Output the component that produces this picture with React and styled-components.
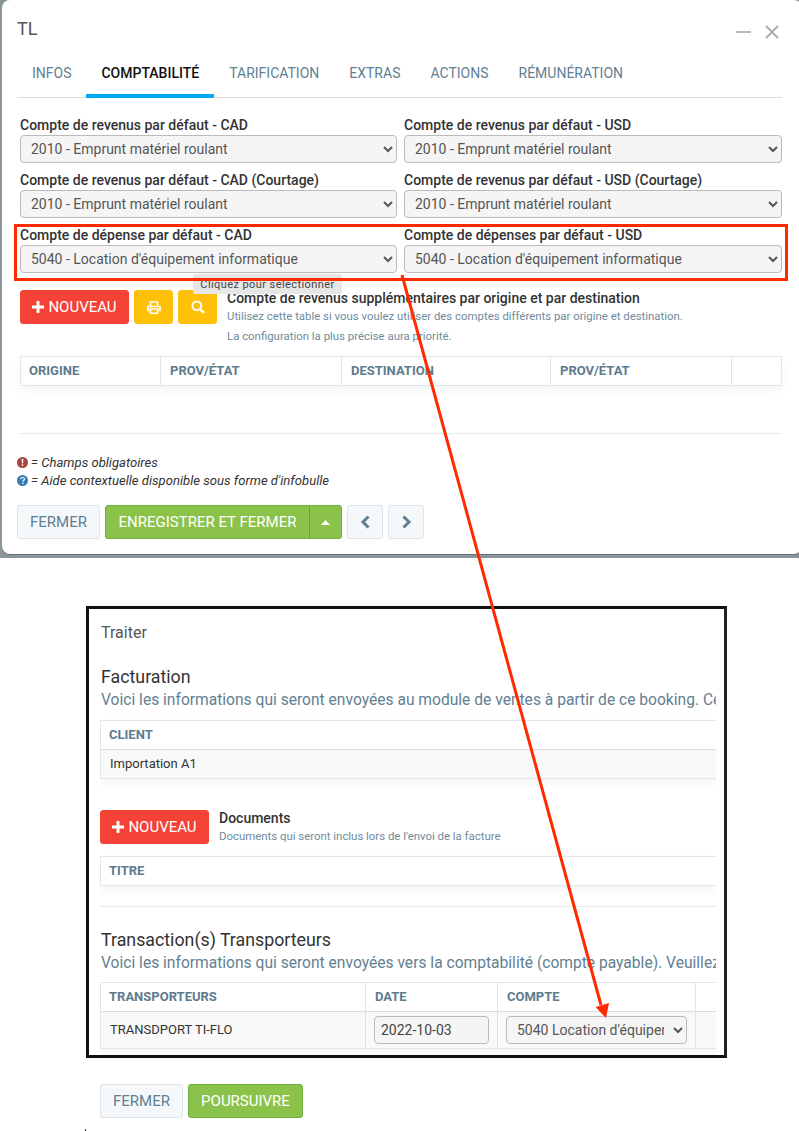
import React from "react";
import styled, { createGlobalStyle } from "styled-components";

const GlobalStyle = createGlobalStyle`
  html, body {
    margin: 0;
    padding: 0;
    background: #fff;
  }
  body {
    font-family: Roboto, "Liberation Sans", sans-serif;
    color: #333;
  }
  * {
    box-sizing: border-box;
  }
`;

const Page = styled.div`
  position: relative;
  width: 799px;
  height: 1131px;
  overflow: hidden;
  background: #fff;
`;

const Backdrop = styled.div`
  height: 558px;
  padding-left: 2px;
  background: #8a9599;
`;

const Modal = styled.div`
  height: 554px;
  margin-right: -3px;
  padding: 0 20px 0 15px;
  background: #fff;
  border-radius: 8px;
  box-shadow: 0 1px 0 #667176;
`;

const ModalHeader = styled.div`
  display: flex;
  align-items: center;
  justify-content: space-between;
  height: 50px;
  padding-top: 6px;
`;

const ModalTitle = styled.div`
  font-size: 18px;
  color: #555;
`;

const WindowIcons = styled.div`
  display: flex;
  align-items: center;
  gap: 14px;
  margin-right: 3px;
  padding-top: 8px;
`;

const Tabs = styled.div`
  display: flex;
  height: 48px;
  border-bottom: 1px solid #ddd;
`;

const Tab = styled.div`
  display: flex;
  align-items: center;
  height: 48px;
  padding: 1px 15px 0;
  font-size: 14px;
  font-weight: ${(props) => (props.$active ? 500 : 400)};
  color: ${(props) => (props.$active ? "#111" : "#5f7f93")};
  border-bottom: 4px solid ${(props) => (props.$active ? "#03a9f4" : "transparent")};
`;

const FormGrid = styled.div`
  display: grid;
  grid-template-columns: 377px 378px;
  column-gap: 7px;
  margin: 19px 0 0 3px;
`;

const HighlightRow = styled.div`
  position: relative;
  grid-column: 1 / 3;
  display: grid;
  grid-template-columns: 377px 378px;
  column-gap: 7px;
`;

const RedBox = styled.div`
  position: absolute;
  z-index: 2;
  top: -3px;
  left: -6px;
  width: 774px;
  height: 57px;
  border: 3px solid #ff2a00;
  pointer-events: none;
`;

const Field = styled.div`
  height: 55px;
`;

const FieldLabel = styled.div`
  height: 18px;
  font-size: 14px;
  line-height: 16px;
  font-weight: 500;
  color: #333;
`;

const Select = styled.select`
  display: block;
  width: ${(props) => props.$width || "100%"};
  height: 28px;
  padding: 0 6px;
  font-family: Roboto, "Liberation Sans", sans-serif;
  font-size: 14px;
  color: #555;
  background-color: #f5f5f5;
  border: 1px solid #bbb;
  border-radius: 4px;
`;

const Tooltip = styled.div`
  position: absolute;
  z-index: 1;
  top: 274px;
  left: 193px;
  width: 149px;
  height: 20px;
  padding-top: 5px;
  text-align: center;
  font-size: 11px;
  line-height: 12px;
  letter-spacing: 0.42px;
  color: #444;
  background: #e6e6e6;
  border-radius: 2px;
`;

const ActionRow = styled.div`
  display: flex;
  margin: 8px 0 0 3px;
`;

const Button = styled.div`
  display: flex;
  align-items: center;
  justify-content: center;
  flex-shrink: 0;
  gap: 4px;
  height: 34px;
  width: ${(props) => props.$width}px;
  margin-right: ${(props) => props.$gap ?? 5}px;
  font-size: 15px;
  color: ${(props) => props.$color || "#fff"};
  background: ${(props) => props.$bg};
  border: 1px solid ${(props) => props.$border || props.$bg};
  border-radius: 3px;
`;

const HelpTitle = styled.div`
  font-size: 14px;
  line-height: 16px;
  font-weight: 500;
  color: #333;
`;

const HelpText = styled.div`
  margin-top: ${(props) => props.$top}px;
  font-size: 11.4px;
  line-height: 13px;
  color: #6f8b9c;
`;

const Table = styled.div`
  display: grid;
  grid-template-columns: ${(props) => props.$columns};
  width: ${(props) => props.$width}px;
  margin: ${(props) => props.$margin};
  border: 1px solid #dfe7ec;
  box-shadow: 0 4px 8px rgba(90, 120, 140, 0.07);
`;

const HeadCell = styled.div`
  display: flex;
  align-items: center;
  height: 28px;
  padding: 0 0 2px ${(props) => (props.$first ? 8 : 9)}px;
  font-size: 13px;
  font-weight: 700;
  color: #5c7b8d;
  border-left: ${(props) => (props.$first ? "none" : "1px solid #dfe3e6")};
`;

const BodyCell = styled.div`
  display: flex;
  align-items: center;
  height: ${(props) => props.$height}px;
  padding-left: 8px;
  font-size: 14px;
  color: #333;
  background: #f9f9f9;
  border-top: 1px solid #dcdcdc;
  border-left: ${(props) => (props.$first ? "none" : "1px solid #dfe3e6")};
`;

const CellText = styled.span`
  margin: 0 0 2px 1px;
  font-size: 13px;
`;

const Divider = styled.div`
  height: 1px;
  width: ${(props) => props.$width}px;
  margin: ${(props) => props.$margin};
  background: #e8eaeb;
`;

const Legend = styled.div`
  margin: 19px 0 0 0;
`;

const LegendLine = styled.div`
  display: flex;
  align-items: center;
  gap: 3px;
  height: 18px;
  font-size: 13.1px;
  font-style: italic;
  color: #333;
`;

const FooterRow = styled.div`
  display: flex;
  margin-top: ${(props) => props.$top}px;
  margin-left: ${(props) => props.$left || 0}px;
`;

const SplitPart = styled.div`
  display: flex;
  align-items: center;
  justify-content: center;
  height: 100%;
  width: ${(props) => props.$width}px;
  border-left: ${(props) => (props.$divider ? "1px solid #5fa53a" : "none")};
`;

const SplitButton = styled(Button)`
  gap: 0;
`;

const Frame = styled.div`
  width: 641px;
  height: 452px;
  margin: 48px 0 0 86px;
  padding: 0 8px 0 11px;
  border: 3px solid #111;
  border-right-color: #222;
`;

const FrameBody = styled.div`
  height: 100%;
  overflow: hidden;
`;

const FrameTitle = styled.div`
  padding: 14px 0 0 1px;
  height: 57px;
  font-size: 16px;
  line-height: 19px;
  color: #555;
`;

const SectionTitle = styled.div`
  margin-top: ${(props) => props.$top || 0}px;
  padding-left: 1px;
  font-size: 17.8px;
  line-height: 21px;
  color: #333;
`;

const SectionText = styled.div`
  padding-left: 1px;
  margin-top: 4px;
  font-size: 15.6px;
  line-height: 18px;
  color: #638092;
  white-space: nowrap;
`;

const DocRow = styled.div`
  display: flex;
  margin-top: 31px;
`;

const DocTitle = styled.div`
  font-size: 14px;
  line-height: 16px;
  font-weight: 500;
  color: #333;
`;

const DocText = styled.div`
  margin-top: 4px;
  font-size: 11.4px;
  line-height: 13px;
  color: #6f8b9c;
`;

const DateInput = styled.div`
  display: flex;
  align-items: center;
  width: 115px;
  height: 28px;
  padding-left: 6px;
  font-size: 14px;
  color: #444;
  background: #f5f5f5;
  border: 1px solid #bbb;
  border-radius: 4px;
`;

const Overlay = styled.svg`
  position: absolute;
  z-index: 3;
  top: 0;
  left: 0;
  pointer-events: none;
`;

const Speck = styled.div`
  position: absolute;
  left: 85px;
  top: 1129px;
  width: 1px;
  height: 2px;
  background: #333;
`;

const Chevron = ({ dir }) => (
  <svg width="11" height="16" viewBox="0 0 11 16">
    <path
      d={dir === "left" ? "M8.5 2.5L3 8l5.5 5.5" : "M2.5 2.5L8 8l-5.5 5.5"}
      fill="none"
      stroke="#5f7f93"
      strokeWidth="3"
    />
  </svg>
);

const PlusIcon = () => (
  <svg width="12" height="12" viewBox="0 0 12 12">
    <path d="M4.5 0h3v4.5H12v3H7.5V12h-3V7.5H0v-3h4.5z" fill="#fff" />
  </svg>
);

const PrintIcon = () => (
  <svg width="14" height="13" viewBox="0 0 14 13" fill="none" stroke="#fff" strokeWidth="1.6">
    <path d="M3.5 5V1h7v4M3 9.5H1V5.5h12v4h-2" />
    <path d="M3.5 8h7v4.2h-7z" />
  </svg>
);

const SearchIcon = () => (
  <svg width="14" height="14" viewBox="0 0 14 14" fill="none" stroke="#fff">
    <circle cx="5.8" cy="5.8" r="4.4" strokeWidth="2" />
    <path d="M9 9l4 4" strokeWidth="2.4" />
  </svg>
);

const BadgeIcon = ({ color, children }) => (
  <svg width="11" height="11" viewBox="0 0 11 11">
    <circle cx="5.5" cy="5.5" r="5.5" fill={color} />
    {children}
  </svg>
);

const tabs = ["INFOS", "COMPTABILITÉ", "TARIFICATION", "EXTRAS", "ACTIONS", "RÉMUNÉRATION"];
const REVENUE = "2010 - Emprunt matériel roulant";
const EXPENSE = "5040 - Location d'équipement informatique";
const PRIMARY_GREEN = "#8bc34a";
const ghost = { $bg: "#f5f8fa", $border: "#dde3e7", $color: "#5f7f93" };

const AccountField = ({ label, value }) => (
  <Field>
    <FieldLabel>{label}</FieldLabel>
    <Select defaultValue={value}>
      <option>{value}</option>
    </Select>
  </Field>
);

const App = () => (
  <Page>
    <GlobalStyle />
    <Backdrop>
      <Modal>
        <ModalHeader>
          <ModalTitle>TL</ModalTitle>
          <WindowIcons>
            <svg width="15" height="14" viewBox="0 0 15 14">
              <path d="M0 7h15" stroke="#aaa" strokeWidth="1.6" />
            </svg>
            <svg width="14" height="14" viewBox="0 0 14 14">
              <path d="M1 1l12 12M13 1L1 13" stroke="#aaa" strokeWidth="1.8" />
            </svg>
          </WindowIcons>
        </ModalHeader>
        <Tabs>
          {tabs.map((name) => (
            <Tab key={name} $active={name === "COMPTABILITÉ"}>
              {name}
            </Tab>
          ))}
        </Tabs>
        <FormGrid>
          <AccountField label="Compte de revenus par défaut - CAD" value={REVENUE} />
          <AccountField label="Compte de revenus par défaut - USD" value={REVENUE} />
          <AccountField label="Compte de revenus par défaut - CAD (Courtage)" value={REVENUE} />
          <AccountField label="Compte de revenus par défaut - USD (Courtage)" value={REVENUE} />
          <HighlightRow>
            <RedBox />
            <AccountField label="Compte de dépense par défaut - CAD" value={EXPENSE} />
            <AccountField label="Compte de dépenses par défaut - USD" value={EXPENSE} />
          </HighlightRow>
        </FormGrid>
        <ActionRow>
          <Button $width={109} $bg="#f44336">
            <PlusIcon />
            NOUVEAU
          </Button>
          <Button $width={39} $bg="#ffc107">
            <PrintIcon />
          </Button>
          <Button $width={39} $bg="#ffc107" $gap={10}>
            <SearchIcon />
          </Button>
          <div>
            <HelpTitle>Compte de revenus supplémentaires par origine et par destination</HelpTitle>
            <HelpText $top={4}>
              Utilisez cette table si vous voulez utiliser des comptes différents par origine et destination.
            </HelpText>
            <HelpText $top={7}>La configuration la plus précise aura priorité.</HelpText>
          </div>
        </ActionRow>
        <Table $width={762} $margin="13px 0 0 3px" $columns="139px 181px 209px 181px 1fr">
          <HeadCell $first>ORIGINE</HeadCell>
          <HeadCell>PROV/ÉTAT</HeadCell>
          <HeadCell>DESTINATION</HeadCell>
          <HeadCell>PROV/ÉTAT</HeadCell>
          <HeadCell />
        </Table>
        <Divider $width={762} $margin="47px 0 0 3px" />
        <Legend>
          <LegendLine>
            <BadgeIcon color="#a94442">
              <path d="M4.6 2h1.8l-.3 4.4H4.9zM4.7 7.2h1.6v1.6H4.7z" fill="#fff" />
            </BadgeIcon>
            = Champs obligatoires
          </LegendLine>
          <LegendLine>
            <BadgeIcon color="#337ab7">
              <path d="M3.6 4.2C3.8 2 7.5 2 7.5 4c0 1.3-1.5 1.3-1.5 2.4" fill="none" stroke="#fff" strokeWidth="1.2" />
              <path d="M5.2 7.5h1.3v1.4H5.2z" fill="#fff" />
            </BadgeIcon>
            = Aide contextuelle disponible sous forme d'infobulle
          </LegendLine>
        </Legend>
        <FooterRow $top={16}>
          <Button $width={83} {...ghost}>
            FERMER
          </Button>
          <SplitButton $width={237} $bg={PRIMARY_GREEN} $border="#6cb33f">
            <SplitPart $width={203}>ENREGISTRER ET FERMER</SplitPart>
            <SplitPart $width={32} $divider>
              <svg width="9" height="5" viewBox="0 0 9 5">
                <path d="M4.5 0L9 5H0z" fill="#fff" />
              </svg>
            </SplitPart>
          </SplitButton>
          <Button $width={36} {...ghost}>
            <Chevron dir="left" />
          </Button>
          <Button $width={36} {...ghost}>
            <Chevron dir="right" />
          </Button>
        </FooterRow>
      </Modal>
    </Backdrop>

    <Frame>
      <FrameBody>
        <FrameTitle>Traiter</FrameTitle>
        <SectionTitle>Facturation</SectionTitle>
        <SectionText>
          Voici les informations qui seront envoyées au module de ventes à partir de ce booking. Ceci est un aperçu
        </SectionText>
        <Table $width={620} $margin="11px 0 0 0" $columns="1fr">
          <HeadCell $first>CLIENT</HeadCell>
          <BodyCell $first $height={29}>
            <CellText>Importation A1</CellText>
          </BodyCell>
        </Table>
        <DocRow>
          <Button $width={109} $bg="#f44336" $gap={10}>
            <PlusIcon />
            NOUVEAU
          </Button>
          <div>
            <DocTitle>Documents</DocTitle>
            <DocText>Documents qui seront inclus lors de l'envoi de la facture</DocText>
          </div>
        </DocRow>
        <Table $width={620} $margin="12px 0 0 0" $columns="1fr">
          <HeadCell $first>TITRE</HeadCell>
        </Table>
        <Divider $width={616} $margin="20px 0 0 0" />
        <SectionTitle $top={22}>Transaction(s) Transporteurs</SectionTitle>
        <SectionText>
          Voici les informations qui seront envoyées vers la comptabilité (compte payable). Veuillez vérifier
        </SectionText>
        <Table $width={620} $margin="10px 0 0 0" $columns="264px 132px 198px 1fr">
          <HeadCell $first>TRANSPORTEURS</HeadCell>
          <HeadCell>DATE</HeadCell>
          <HeadCell>COMPTE</HeadCell>
          <HeadCell />
          <BodyCell $first $height={37}>
            <CellText>TRANSDPORT TI-FLO</CellText>
          </BodyCell>
          <BodyCell $height={37}>
            <DateInput>2022-10-03</DateInput>
          </BodyCell>
          <BodyCell $height={37}>
            <Select $width="181px" defaultValue="5040">
              <option value="5040">5040 Location d'équipement informatique</option>
            </Select>
          </BodyCell>
          <BodyCell $height={37} />
        </Table>
      </FrameBody>
    </Frame>

    <FooterRow $top={26} $left={100}>
      <Button $width={83} {...ghost}>
        FERMER
      </Button>
      <Button $width={115} $bg={PRIMARY_GREEN} $border="#6cb33f">
        POURSUIVRE
      </Button>
    </FooterRow>

    <Tooltip>Cliquez pour sélectionner</Tooltip>
    <Speck />

    <Overlay width="799" height="1131" viewBox="0 0 799 1131">
      <path d="M402 275L601 1005" stroke="#ff2a00" strokeWidth="3" fill="none" />
      <path d="M606 1018L595.5 1007L609 1003z" fill="#ff2a00" />
    </Overlay>
  </Page>
);

export default App;
